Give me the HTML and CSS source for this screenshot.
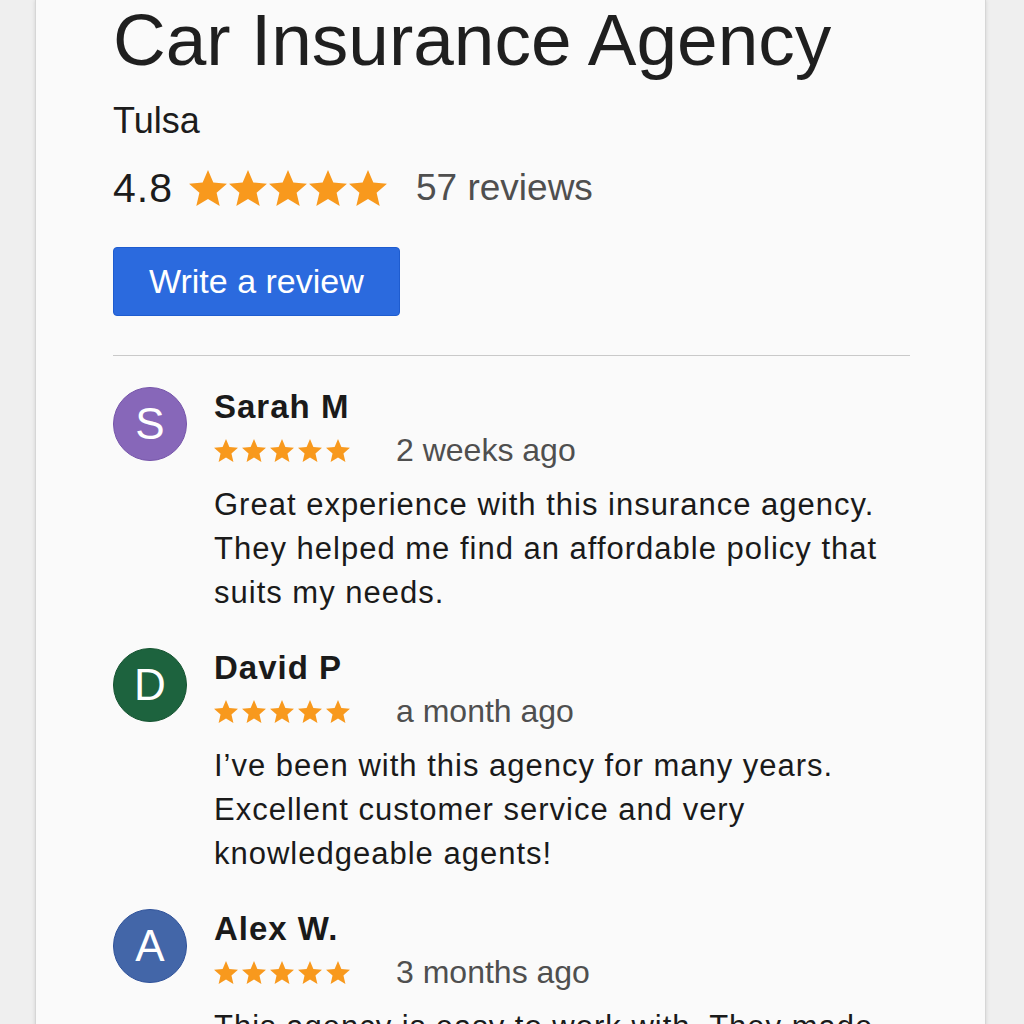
FILE: index.html
```html
<!DOCTYPE html>
<html>
<head>
    <title>Car Insurance Agency - Reviews</title>
    <link rel="stylesheet" href="styles.css">
</head>
<body>

    <svg class="defs" width="0" height="0">
        <symbol id="star" viewBox="2 2 20 19">
            <path d="M12 17.27L18.18 21l-1.64-7.03L22 9.24l-7.19-.61L12 2 9.19 8.63 2 9.24l5.46 4.73L5.82 21z"/>
        </symbol>
    </svg>

    <div class="card">
        <h1 class="title">Car Insurance Agency</h1>
        <div class="city">Tulsa</div>

        <div class="rating">
            <span class="score">4.8</span>
            <span class="stars stars--big">
                <svg><use href="#star"/></svg>
                <svg><use href="#star"/></svg>
                <svg><use href="#star"/></svg>
                <svg><use href="#star"/></svg>
                <svg><use href="#star"/></svg>
            </span>
            <span class="count">57 reviews</span>
        </div>

        <button class="btn-review">Write a review</button>

        <hr class="divider">

        <!-- reviews -->
        <div class="review">
            <div class="avatar avatar--purple">S</div>
            <div class="review-body">
                <div class="name">Sarah M</div>
                <div class="meta">
                    <span class="stars stars--small">
                        <svg><use href="#star"/></svg>
                        <svg><use href="#star"/></svg>
                        <svg><use href="#star"/></svg>
                        <svg><use href="#star"/></svg>
                        <svg><use href="#star"/></svg>
                    </span>
                    <span class="when">2 weeks ago</span>
                </div>
                <p class="text">Great experience with this insurance agency. They helped me find an affordable policy that suits my needs.</p>
            </div>
        </div>

        <div class="review">
            <div class="avatar avatar--green">D</div>
            <div class="review-body">
                <div class="name">David P</div>
                <div class="meta">
                    <span class="stars stars--small">
                        <svg><use href="#star"/></svg>
                        <svg><use href="#star"/></svg>
                        <svg><use href="#star"/></svg>
                        <svg><use href="#star"/></svg>
                        <svg><use href="#star"/></svg>
                    </span>
                    <span class="when">a month ago</span>
                </div>
                <p class="text">I’ve been with this agency for many years. Excellent customer service and very knowledgeable agents!</p>
            </div>
        </div>

        <div class="review">
            <div class="avatar avatar--blue">A</div>
            <div class="review-body">
                <div class="name">Alex W.</div>
                <div class="meta">
                    <span class="stars stars--small">
                        <svg><use href="#star"/></svg>
                        <svg><use href="#star"/></svg>
                        <svg><use href="#star"/></svg>
                        <svg><use href="#star"/></svg>
                        <svg><use href="#star"/></svg>
                    </span>
                    <span class="when">3 months ago</span>
                </div>
                <p class="text">This agency is easy to work with. They made the whole process simple and quick.</p>
            </div>
        </div>
    </div>

</body>
</html>
```

FILE: styles.css
```css
body {
    margin: 0;
    background: #efefef;
    font-family: "Liberation Sans", Arial, sans-serif;
    color: #1c1c1c;
}

.defs {
    position: absolute;
}

.card {
    box-sizing: border-box;
    width: 951px;
    min-height: 1100px;
    margin: 0 0 0 35px;
    padding: 0 75px 0 77px;
    background: #fafafa;
    border-left: 1px solid #d6d6d6;
    border-right: 1px solid #d6d6d6;
    box-shadow: 0 0 4px rgba(0, 0, 0, 0.12);
}

.title {
    margin: 0;
    font-size: 73px;
    font-weight: normal;
    line-height: 80px;
    color: #1f1f1f;
}

.city {
    margin-top: 19px;
    font-size: 36px;
    line-height: 44px;
}

.rating {
    display: flex;
    align-items: center;
    height: 48px;
    margin-top: 21px;
}

    .rating .score {
        font-size: 41px;
        letter-spacing: 1px;
        color: #1c1c1c;
    }

    .rating .count {
        margin-left: 29px;
        font-size: 37px;
        color: #4f4f4f;
    }

.stars {
    display: inline-flex;
    fill: #f8991d;
}

.stars--big {
    margin-left: 16px;
    gap: 2px;
}

    .stars--big svg {
        width: 38px;
        height: 36px;
    }

.stars--small {
    gap: 4px;
}

    .stars--small svg {
        width: 24px;
        height: 23px;
    }

.btn-review {
    display: block;
    margin-top: 35px;
    height: 69px;
    padding: 0 35px;
    background: #2b6ade;
    border: 1px solid #1e5ccf;
    border-radius: 4px;
    color: #fff;
    font-family: "Liberation Sans", Arial, sans-serif;
    font-size: 34px;
}

.divider {
    margin: 39px 0 31px;
    border: none;
    border-top: 1.5px solid #c9c9c9;
}

.review {
    display: flex;
    gap: 27px;
    margin-bottom: 33px;
}

.avatar {
    flex: none;
    box-sizing: border-box;
    width: 74px;
    height: 74px;
    border-radius: 50%;
    display: flex;
    align-items: center;
    justify-content: center;
    color: #fff;
    font-size: 44px;
}

.avatar--purple {
    background: #8767b9;
    border: 1px solid #7655aa;
}

.avatar--green {
    background: #1d633e;
    border: 1px solid #155431;
}

.avatar--blue {
    background: #4366a8;
    border: 1px solid #2f529a;
}

.review-body {
    flex: 1;
}

.name {
    font-size: 33px;
    font-weight: bold;
    letter-spacing: 1px;
    line-height: 40px;
    color: #1a1a1a;
}

.meta {
    display: flex;
    align-items: center;
    height: 40px;
    margin-top: 3px;
}

.when {
    margin-left: 46px;
    font-size: 32px;
    color: #4f4f4f;
}

.text {
    margin: 13px 0 0;
    font-size: 31px;
    letter-spacing: 1px;
    line-height: 44px;
    color: #1a1a1a;
}
```
